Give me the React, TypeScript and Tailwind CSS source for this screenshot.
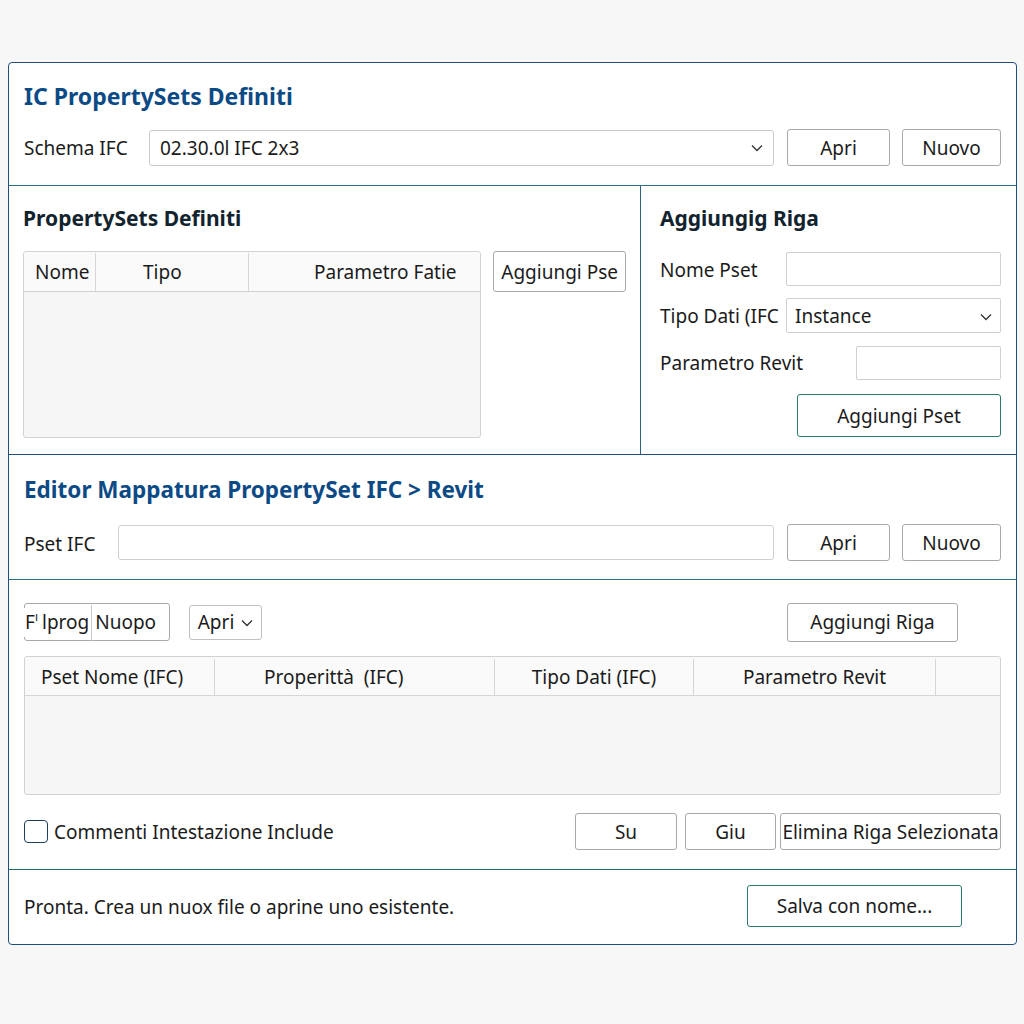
import React from "react";

const font = { fontFamily: '"Noto Sans", "Open Sans", sans-serif' };

function Chevron({ className = "" }: { className?: string }) {
  return (
    <svg width="12" height="8" viewBox="0 0 12 8" className={className}>
      <path d="M1 1.5 L6 6.5 L11 1.5" fill="none" stroke="#333" strokeWidth="1.3" />
    </svg>
  );
}

function Btn({
  children,
  className = "",
  accent = false,
}: {
  children: React.ReactNode;
  className?: string;
  accent?: boolean;
}) {
  return (
    <div
      className={
        "flex items-center justify-center rounded-[3px] border bg-white pt-[1px] text-[19px] text-[#1b1b1b] " +
        (accent ? "border-[#2c7a6c] " : "border-[#a9a9a9] ") +
        className
      }
    >
      {children}
    </div>
  );
}

export default function App() {
  return (
    <div className="min-h-[1024px] w-[1024px] bg-[#f7f7f7] pt-[62px]" style={font}>
      <div className="ml-[8px] flex w-[1009px] flex-col rounded-[4px] border border-[#1e4f7e] bg-white">
        {/* Header */}
        <div className="h-[123px] border-b border-[#2c6f84] px-[15px] pt-[19px]">
          <div className="h-[28px] text-[23px] font-bold leading-[28px] text-[#0c4a86]">
            IC PropertySets Definiti
          </div>
          <div className="mt-[19px] flex h-[37px] items-center">
            <div className="w-[125px] pt-[2px] text-[19px] text-[#1b1b1b]">Schema IFC</div>
            <div className="flex h-[36px] w-[625px] items-center justify-between rounded-[3px] border border-[#c9c9c9] pl-[10px] pr-[10px] pt-[1px] text-[19px] text-[#1b1b1b]">
              <span>02.30.0l IFC 2x3</span>
              <Chevron />
            </div>
            <Btn className="ml-[13px] h-[37px] w-[103px]">Apri</Btn>
            <Btn className="ml-[12px] h-[37px] w-[99px]">Nuovo</Btn>
          </div>
        </div>

        {/* Middle */}
        <div className="flex h-[269px] border-b border-[#1e4f7e]">
          <div className="w-[632px] border-r border-[#2c6383] px-[14px] pt-[19px]">
            <div className="h-[26px] text-[21px] font-bold leading-[26px] text-[#13232e]">
              PropertySets Definiti
            </div>
            <div className="mt-[20px] flex">
              <div className="flex h-[187px] w-[459px] flex-col overflow-hidden rounded-[3px] border border-[#d2d2d2] bg-[#f6f6f6]">
                <div className="flex h-[40px] border-b border-[#d2d2d2] bg-[#fafafa] pt-[1px] text-[19px] text-[#1b1b1b]">
                  <div className="flex w-[72px] items-center border-r border-[#d6d6d6] pl-[11px]">Nome</div>
                  <div className="flex w-[153px] items-center border-r border-[#d6d6d6] pl-[47px]">Tipo</div>
                  <div className="flex flex-1 items-center pl-[65px]">Parametro Fatie</div>
                </div>
              </div>
              <Btn className="ml-[12px] h-[41px] w-[133px]">Aggiungi Pse</Btn>
            </div>
          </div>
          <div className="flex-1 pl-[19px] pr-[15px] pt-[19px]">
            <div className="h-[26px] text-[21px] font-bold leading-[26px] text-[#13232e]">
              Aggiungig Riga
            </div>
            <div className="mt-[21px] flex h-[34px] items-center justify-between">
              <span className="pt-[2px] text-[19px] text-[#1b1b1b]">Nome Pset</span>
              <div className="h-[34px] w-[215px] rounded-[2px] border border-[#cfcfcf]" />
            </div>
            <div className="mt-[12px] flex h-[35px] items-center justify-between">
              <span className="pt-[2px] text-[19px] text-[#1b1b1b]">Tipo Dati (IFC</span>
              <div className="flex h-[35px] w-[215px] items-center justify-between rounded-[2px] border border-[#cfcfcf] pl-[8px] pr-[8px] pt-[2px] text-[19px] text-[#1b1b1b]">
                <span>Instance</span>
                <Chevron />
              </div>
            </div>
            <div className="mt-[13px] flex h-[34px] items-center justify-between">
              <span className="pt-[1px] text-[19px] text-[#1b1b1b]">Parametro Revit</span>
              <div className="h-[34px] w-[145px] rounded-[2px] border border-[#cfcfcf]" />
            </div>
            <div className="mt-[14px] flex justify-end">
              <Btn accent className="h-[43px] w-[204px]">Aggiungi Pset</Btn>
            </div>
          </div>
        </div>

        {/* Editor */}
        <div className="h-[125px] border-b border-[#2c6f84] px-[15px] pt-[21px]">
          <div className="h-[28px] text-[22.5px] font-bold leading-[28px] text-[#0c4a86]">
            Editor Mappatura PropertySet IFC &gt; Revit
          </div>
          <div className="mt-[20px] flex h-[37px] items-center">
            <div className="w-[94px] pt-[3px] text-[19px] text-[#1b1b1b]">Pset IFC</div>
            <div className="h-[35px] w-[656px] rounded-[3px] border border-[#cfcfcf]" />
            <Btn className="ml-[13px] h-[37px] w-[103px]">Apri</Btn>
            <Btn className="ml-[12px] h-[37px] w-[99px]">Nuovo</Btn>
          </div>
        </div>

        {/* Mapping table */}
        <div className="h-[290px] border-b border-[#1e6f6a] px-[15px] pt-[23px]">
          <div className="flex h-[38px] items-center">
            <div className="flex h-[38px] w-[146px] items-center rounded-[3px] border border-[#a9a9a9] pt-[1px] text-[19px] text-[#1b1b1b]">
              <span className="-ml-[1px] bg-white pl-[1px] pr-[1px]">F<span className="align-top text-[12px]">ı</span></span>
              <span className="pl-[3px] pr-[2px]">lprog</span>
              <span className="h-[36px] border-l border-[#c9c9c9]" />
              <span className="pl-[3px]">Nuopo</span>
            </div>
            <div className="ml-[19px] flex h-[35px] w-[73px] items-center justify-center gap-[7px] rounded-[3px] border border-[#c0c0c0] pt-[1px] text-[19px] text-[#1b1b1b]">
              <span>Apri</span>
              <Chevron />
            </div>
            <div className="flex-1" />
            <Btn className="mr-[43px] h-[39px] w-[171px]">Aggiungi Riga</Btn>
          </div>
          <div className="mt-[15px] flex h-[139px] flex-col overflow-hidden rounded-[3px] border border-[#d2d2d2] bg-[#f6f6f6]">
            <div className="flex h-[39px] border-b border-[#d6d6d6] bg-[#fafafa] pt-[2px] text-[19px] text-[#1b1b1b]">
              <div className="flex w-[190px] items-center border-r border-[#d6d6d6] pl-[16px]">Pset Nome (IFC)</div>
              <div className="flex w-[280px] items-center border-r border-[#d6d6d6] pl-[49px]">Properittà&nbsp; (IFC)</div>
              <div className="flex w-[199px] items-center justify-center border-r border-[#d6d6d6]">Tipo Dati (IFC)</div>
              <div className="flex w-[242px] items-center justify-center border-r border-[#d6d6d6]">Parametro Revit</div>
              <div className="flex-1" />
            </div>
          </div>
          <div className="mt-[18px] flex h-[37px] items-center">
            <div className="h-[23px] w-[24px] rounded-[4px] border-[1.5px] border-[#1f3c5a]" />
            <span className="ml-[6px] pt-[1px] text-[19px] text-[#1b1b1b]">Commenti Intestazione Include</span>
            <div className="flex-1" />
            <Btn className="h-[37px] w-[102px]">Su</Btn>
            <Btn className="ml-[8px] h-[37px] w-[91px]">Giu</Btn>
            <Btn className="ml-[4px] h-[37px] w-[221px] whitespace-nowrap">Elimina Riga Selezionata</Btn>
          </div>
        </div>

        {/* Footer */}
        <div className="flex h-[74px] items-start justify-between pl-[15px] pr-[54px] pt-[15px]">
          <span className="mt-[8px] text-[19px] text-[#1b1b1b]">
            Pronta. Crea un nuox file o aprine uno esistente.
          </span>
          <Btn accent className="h-[42px] w-[215px]">Salva con nome...</Btn>
        </div>
      </div>
    </div>
  );
}
